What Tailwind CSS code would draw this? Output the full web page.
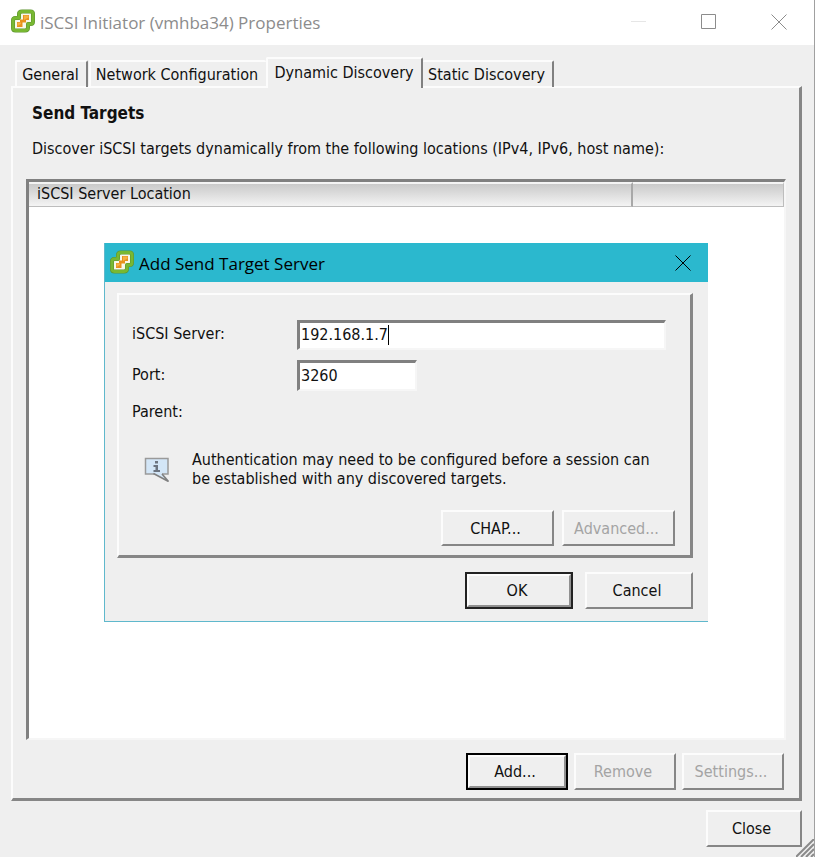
<!DOCTYPE html>
<html lang="en">
<head>
    <meta charset="UTF-8">
    <meta name="viewport" content="width=device-width, initial-scale=1.0">
    <script src="https://cdn.jsdelivr.net/npm/@tailwindcss/browser@4"></script>
    <title>iSCSI Initiator (vmhba34) Properties</title>
</head>
<body class="relative min-h-screen flex flex-col bg-[#efefef] border-r border-[#a0a0a0] font-['DejaVu_Sans_Condensed','DejaVu_Sans',sans-serif] text-[16px] leading-[19px] text-[#111]">

<!-- shared icon -->
<svg class="hidden">
    <symbol id="vm" viewBox="0 0 24 24">
        <path d="M11 2.500H19.500Q22 2.500 22 5V12.500Q22 15 19.500 15H17V18.500Q17 21.500 14 21.500H4.500Q2 21.500 2 19V11.500Q2 9 4.500 9H8V5Q8 2.500 11 2.500Z" fill="#f8f8ea" stroke="#5e9430" stroke-width="4" stroke-linejoin="round" />
        <path d="M11 2.500H19.500Q22 2.500 22 5V12.500Q22 15 19.500 15H17V18.500Q17 21.500 14 21.500H4.500Q2 21.500 2 19V11.500Q2 9 4.500 9H8V5Q8 2.500 11 2.500Z" fill="none" stroke="#78b832" stroke-width="2.800" stroke-linejoin="round" />
        <path d="M12 6H18V11H15V13.500H11.500V18H6V13H9V10.500H12Z" fill="#e8921c" />
        <path d="M13 6.500H17.500V8.500L13 11ZM6.500 13.500H10V15L6.500 17Z" fill="#f6b044" />
    </symbol>
</svg>

<header class="flex items-center h-[45px] pl-[11px] bg-white text-[#8c8c8c]">
    <svg class="size-6 mb-1"><use href="#vm" /></svg>
    <h1 class="flex-1 ml-[5px] font-['Open_Sans',sans-serif] text-[17px]">iSCSI Initiator (vmhba34) Properties</h1>
    <div class="flex gap-[54px] pr-[27px] mb-[2px]">
        <button aria-label="Minimize"><svg class="w-4 h-4" fill="none" stroke="#e6e6e6"><path d="M0 7.500H15" /></svg></button>
        <button aria-label="Maximize"><svg class="w-4 h-4" fill="none" stroke="#8c8c8c"><path d="M0.500 0.500H14.500V14.500H0.500Z" /></svg></button>
        <button aria-label="Close window"><svg class="w-4 h-4" fill="none" stroke="#8c8c8c"><path d="M0.500 0.500L15.500 15.500M15.500 0.500L0.500 15.500" /></svg></button>
    </div>
</header>

<main class="flex-1 flex flex-col pl-[11px] pr-3 pb-[10px]">
    <nav class="relative z-10 flex items-end h-[43px] pl-1 -mb-[2px]">
        <button class="h-[27px] w-[73px] pr-[2px] mb-[1px] border-t-2 border-l-2 border-r-2 border-[#fcfcfc] border-r-[#808080] rounded-t-xs">General</button>
        <button class="h-[27px] w-[177px] pr-[3px] mb-[1px] ml-[1px] border-t-2 border-l-2 border-[#fcfcfc] rounded-t-xs">Network Configuration</button>
        <button class="h-[31px] w-[157px] pb-[3px] pr-[1px] border-t-2 border-l-2 border-r-2 border-[#fcfcfc] border-r-[#808080] rounded-t-xs bg-[#efefef]">Dynamic Discovery</button>
        <button class="h-[27px] w-[131px] pr-[2px] mb-[1px] border-t-2 border-r-2 border-[#fcfcfc] border-r-[#808080] rounded-t-xs">Static Discovery</button>
    </nav>

    <section class="flex-1 flex flex-col pt-[16px] px-[13px] pb-[8px] border-t-2 border-l-2 border-r-3 border-b-3 border-[#fcfcfc] border-r-[#868686] border-b-[#868686]">
        <h2 class="pl-[6px] font-['DejaVu_Sans_Condensed',sans-serif] text-[17px] font-bold">Send Targets</h2>
        <p class="pl-[6px] mt-[16px]">Discover iSCSI targets dynamically from the following locations (IPv4, IPv6, host name):</p>
        <div class="flex-1 mt-[21px] bg-white border-t-3 border-l-3 border-b-2 border-r-2 border-[#808080] border-b-[#f6f6f6] border-r-[#f6f6f6]">
            <table class="w-full border-separate border-spacing-0">
                <thead>
                <tr class="bg-linear-to-b from-[#c6c6c6] to-[#f6f6f6]">
                    <th class="h-[25px] w-4/5 pl-2 pb-[2px] text-left font-normal leading-[18px] border-t-2 border-t-[#f4f4f4] border-r-2 border-r-[#a8a8a8] border-b border-b-[#bdbdbd]">iSCSI Server Location</th>
                    <th class="h-[25px] border-t-2 border-t-[#f4f4f4] border-r border-r-[#bdbdbd] border-b border-b-[#bdbdbd]"></th>
                </tr>
                </thead>
            </table>
        </div>
        <div class="flex justify-end gap-[6px] mt-[13px] mr-[2px]">
            <button class="w-[102px] h-[37px] border-2 border-black"><span class="flex h-full items-center justify-center pr-1 border-2 border-[#fcfcfc] border-r-[#909090] border-b-[#909090]">Add...</span></button>
            <button disabled class="w-[102px] h-[37px] pr-1 border-2 border-[#fcfcfc] border-r-[#868686] border-b-[#868686] text-[#a4a4a4]">Remove</button>
            <button disabled class="w-[102px] h-[37px] pr-1 border-2 border-[#fcfcfc] border-r-[#868686] border-b-[#868686] text-[#a4a4a4]">Settings...</button>
        </div>
    </section>

    <div class="flex justify-end mt-[9px]">
        <button class="w-[96px] h-[37px] pr-[5px] border-2 border-[#fcfcfc] border-r-[#868686] border-b-[#868686]">Close</button>
    </div>
</main>

<!-- resize grip -->
<svg class="absolute right-0 bottom-0 w-[18px] h-[18px]" stroke="#8a8a8a" stroke-width="2"><path d="M0 18L18 0M5 18L18 5M10 18L18 10M15 18L18 15" /></svg>

<div role="dialog" aria-label="Add Send Target Server" class="absolute z-20 left-[104px] top-[243px] w-[604px] bg-[#efefef] border-l border-b border-[#5fb8cc]">
    <div class="flex items-center h-[39px] pl-[5px] pr-[17px] bg-[#2bb8ce] text-black">
        <svg class="size-6 mb-[2px]"><use href="#vm" /></svg>
        <h2 class="flex-1 ml-[5px] pt-[2px] font-['Open_Sans',sans-serif] text-[17px]">Add Send Target Server</h2>
        <button aria-label="Close dialog"><svg class="w-4 h-4" fill="none" stroke="#000"><path d="M0.500 0.500L15.500 15.500M15.500 0.500L0.500 15.500" /></svg></button>
    </div>
    <div class="pt-[11px] pl-3 pr-[15px] pb-3">
        <div class="pt-[25px] pl-[13px] pr-[15px] pb-[9px] border-t-2 border-l-2 border-b-3 border-r-3 border-[#fcfcfc] border-r-[#868686] border-b-[#868686]">
            <div class="grid grid-cols-[165px_1fr] items-center">
                <label for="server" class="pb-1">iSCSI Server:</label>
                <div class="flex items-center w-[369px] h-[30px] pl-[1px] pb-[2px] bg-white border-t-3 border-l-3 border-b-2 border-r-2 border-[#808080] border-b-[#f6f6f6] border-r-[#f6f6f6]">
                    <input id="server" type="text" value="192.168.1.7" class="field-sizing-content outline-none">
                    <span class="w-px h-5 bg-black"></span>
                </div>
                <label for="port" class="mt-2">Port:</label>
                <input id="port" type="text" value="3260" class="w-[120px] h-[31px] mt-[10px] pl-[1px] pb-[2px] bg-white outline-none border-t-3 border-l-3 border-b-2 border-r-2 border-[#808080] border-b-[#f6f6f6] border-r-[#f6f6f6]">
                <span class="mt-[11px]">Parent:</span>
            </div>
            <div class="flex items-center mt-[29px]">
                <svg class="w-[26px] h-[26px] ml-[12px] mr-[22px]" viewBox="0 0 26 26">
                    <path d="M1.500 2.500H24V18H19L25 25L9 18H1.500Z" fill="#d3e6f7" />
                    <path d="M10 18H1.500V2.500H24V18H18" fill="none" stroke="#9a9a9a" stroke-width="1.500" />
                    <path d="M9.500 17.500L24.500 25.500L18 18" fill="none" stroke="#808080" stroke-width="1.600" />
                    <path d="M11 5H14V7.500H11ZM9.500 9H14V14H16V16H9.500V14H11.500V11H9.500Z" fill="#6c7480" />
                </svg>
                <p class="flex-1">Authentication may need to be configured before a session can<br>be established with any discovered targets.</p>
            </div>
            <div class="flex justify-end gap-2 mt-[22px]">
                <button class="w-[113px] h-[36px] pr-1 border-2 border-[#fcfcfc] border-r-[#868686] border-b-[#868686]">CHAP...</button>
                <button disabled class="w-[113px] h-[36px] pr-1 border-2 border-[#fcfcfc] border-r-[#868686] border-b-[#868686] text-[#a4a4a4]">Advanced...</button>
            </div>
        </div>
        <div class="flex justify-end gap-3 mt-[14px]">
            <button class="w-[108px] h-[37px] border-2 border-[#222]"><span class="flex h-full items-center justify-center pr-1 border-2 border-[#fcfcfc] border-r-[#909090] border-b-[#909090]">OK</span></button>
            <button class="w-[108px] h-[37px] pr-1 border-2 border-[#fcfcfc] border-r-[#868686] border-b-[#868686]">Cancel</button>
        </div>
    </div>
</div>
</body>
</html>
